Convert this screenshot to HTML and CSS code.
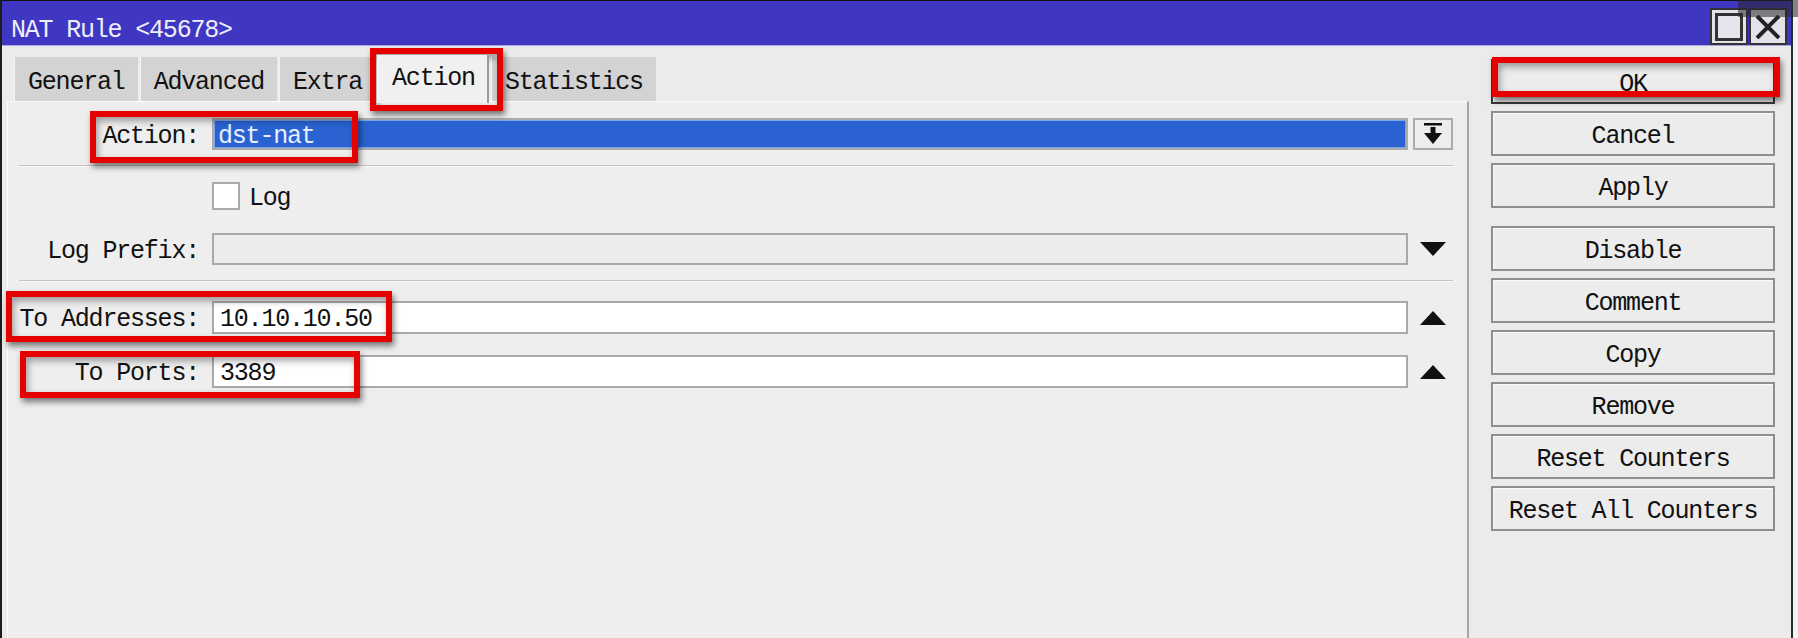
FILE: index.html
```html
<!DOCTYPE html>
<html>
<head>
<meta charset="utf-8">
<link rel="stylesheet" href="styles.css">
</head>
<body>
<div class="screen">
  <div class="window">
    <div class="titlebar">
      <span class="title">NAT Rule &lt;45678&gt;</span>
      <div class="tb-btns">
        <span class="tb-btn"><span class="sq"></span></span>
        <span class="tb-btn">
          <svg width="26" height="24" viewBox="0 0 26 24"><path d="M2 1 L24 23 M24 1 L2 23" stroke="#222" stroke-width="4" fill="none"/></svg>
        </span>
      </div>
    </div>
    <div class="main">
      <div class="left">
        <div class="tabs">
          <span class="tab">General</span>
          <span class="tab">Advanced</span>
          <span class="tab">Extra</span>
          <span class="tab active">Action</span>
          <span class="tab">Statistics</span>
        </div>
        <div class="panel">
          <div class="row r-action">
            <span class="label">Action:</span>
            <span class="field selected"><span class="sel-text">dst-nat</span></span>
            <span class="side dd">
              <svg width="20" height="22" viewBox="0 0 20 22"><rect x="1" y="0" width="18" height="2.5" fill="#111"/><rect x="7.5" y="4" width="5" height="8" fill="#111"/><path d="M1 10 L19 10 L10 21 Z" fill="#111"/></svg>
            </span>
          </div>
          <div class="sep s1"></div>
          <div class="row r-log">
            <span class="label"></span>
            <span class="check-wrap"><span class="check"></span><span class="check-label">Log</span></span>
          </div>
          <div class="row r-prefix">
            <span class="label">Log Prefix:</span>
            <span class="field disabled"></span>
            <span class="side"><svg width="26" height="14" viewBox="0 0 26 14"><path d="M0 0 L26 0 L13 14 Z" fill="#111"/></svg></span>
          </div>
          <div class="sep s2"></div>
          <div class="row r-addr">
            <span class="label">To Addresses:</span>
            <span class="field">10.10.10.50</span>
            <span class="side"><svg width="26" height="14" viewBox="0 0 26 14"><path d="M0 14 L26 14 L13 0 Z" fill="#111"/></svg></span>
          </div>
          <div class="row r-ports">
            <span class="label">To Ports:</span>
            <span class="field">3389</span>
            <span class="side"><svg width="26" height="14" viewBox="0 0 26 14"><path d="M0 14 L26 14 L13 0 Z" fill="#111"/></svg></span>
          </div>
        </div>
      </div>
      <div class="buttons">
        <span class="btn default">OK</span>
        <span class="btn">Cancel</span>
        <span class="btn">Apply</span>
        <span class="btn group">Disable</span>
        <span class="btn">Comment</span>
        <span class="btn">Copy</span>
        <span class="btn">Remove</span>
        <span class="btn">Reset Counters</span>
        <span class="btn">Reset All Counters</span>
      </div>
    </div>
  </div>
  <div class="mark m-tab"></div>
  <div class="mark m-ok"></div>
  <div class="mark m-action"></div>
  <div class="mark m-addr"></div>
  <div class="mark m-ports"></div>
  <div class="shade"></div>
</div>
</body>
</html>
```
FILE: styles.css
```css
html, body {
  margin: 0;
  padding: 0;
  background: #f4f4f4;
  overflow: hidden;
}
.screen {
  position: relative;
  width: 1798px;
  height: 638px;
  font-family: "Liberation Mono", "DejaVu Sans Mono", monospace;
  font-size: 25px;
  letter-spacing: -1.2px;
  color: #111;
}
.window {
  box-sizing: border-box;
  width: 1793px;
  height: 638px;
  border-left: 2px solid #1c1c1c;
  border-right: 2px solid #2a2a2a;
  border-top: 1px solid #111;
  background: #ebebeb;
  display: flex;
  flex-direction: column;
}
.titlebar {
  height: 44px;
  background: #3f37c2;
  border-bottom: 1px solid #a9a6e6;
  display: flex;
  justify-content: space-between;
  align-items: flex-start;
  padding: 0 4px 0 9px;
  flex: none;
}
.title {
  color: #eeeef8;
  line-height: 40px;
  padding-top: 10px;
}
.tb-btns {
  display: flex;
  gap: 1px;
  margin-top: 7px;
}
.tb-btn {
  box-sizing: border-box;
  width: 38px;
  height: 37px;
  background: #e3e1ea;
  border: 2px solid #333;
  display: flex;
  align-items: center;
  justify-content: center;
}
.tb-btn .sq {
  box-sizing: border-box;
  width: 28px;
  height: 28px;
  border: 3px solid #333;
  background: #e6e4ec;
}
.main {
  flex: 1;
  display: flex;
  min-height: 0;
}
.left {
  width: 1467px;
  display: flex;
  flex-direction: column;
  flex: none;
}
.tabs {
  display: flex;
  gap: 2px;
  height: 44px;
  margin-top: 11px;
  padding-left: 12px;
  align-items: flex-end;
  flex: none;
}
.tab {
  box-sizing: border-box;
  height: 44px;
  padding: 3px 13px 0;
  background: #d3d3d3;
  border-left: 1px solid #f4f4f4;
  line-height: 45px;
  white-space: nowrap;
}
.tab.active {
  height: 48px;
  margin-bottom: -2px;
  background: #f0f0f0;
  border-right: 2px solid #9a9a9a;
  line-height: 45px;
  padding: 1px 12px 0 14px;
  position: relative;
  z-index: 1;
}
.panel {
  box-sizing: border-box;
  margin-left: 5px;
  width: 1462px;
  flex: 1;
  background: #eeeeee;
  border-left: 1px solid #fbfbfb;
  border-top: 1px solid #fbfbfb;
  border-right: 2px solid #a6a6a6;
  padding: 16px 14px 0 0;
  display: flex;
  flex-direction: column;
}
.row {
  display: flex;
  align-items: center;
  flex: none;
  height: 33px;
}
.label {
  width: 191px;
  margin-right: 13px;
  text-align: right;
  white-space: pre;
  flex: none;
  line-height: 24px;
  padding-top: 5px;
}
.field {
  box-sizing: border-box;
  flex: 1;
  height: 33px;
  background: #fff;
  border: 2px solid #a9a9a9;
  padding-left: 6px;
  line-height: 34px;
  white-space: nowrap;
}
.field.disabled {
  background: #ececec;
}
.field.selected {
  height: 32px;
  background: #2a63d1;
  border-color: #ababab;
  box-shadow: inset 0 0 0 1px #7aa6ea;
  padding-left: 4px;
}
.sel-text {
  color: #e6eeff;
  line-height: 33px;
}
.side {
  box-sizing: border-box;
  width: 40px;
  margin-left: 5px;
  height: 32px;
  display: flex;
  align-items: center;
  justify-content: center;
  flex: none;
}
.side.dd {
  border: 2px solid #ababab;
  background: #ededed;
}
.sep {
  flex: none;
  height: 1px;
  background: #c2c2c2;
  border-bottom: 1px solid #fafafa;
  margin-left: 11px;
}
.r-action { height: 32px; }
.s1 { margin-top: 15px; }
.r-log { margin-top: 15px; height: 28px; }
.r-prefix { margin-top: 23px; height: 32px; }
.r-prefix .field { height: 32px; }
.s2 { margin-top: 15px; }
.r-addr { margin-top: 19px; }
.r-ports { margin-top: 21px; }
.check-wrap {
  display: flex;
  align-items: center;
}
.check {
  box-sizing: border-box;
  width: 28px;
  height: 28px;
  background: #fff;
  border: 2px solid #aaaaaa;
  margin-right: 9px;
}
.check-label {
  line-height: 24px;
  padding-top: 5px;
}
.buttons {
  margin-left: 22px;
  width: 284px;
  display: flex;
  flex-direction: column;
  gap: 7px;
  padding-top: 13px;
  flex: none;
}
.btn {
  box-sizing: border-box;
  height: 45px;
  border: 2px solid #8e8e8e;
  background: #ececec;
  box-shadow: inset 1px 1px 0 #fafafa;
  text-align: center;
  line-height: 47px;
  white-space: nowrap;
}
.btn.default {
  border-color: #3a3a3a;
}
.btn.group {
  margin-top: 11px;
}
.mark {
  position: absolute;
  box-sizing: border-box;
  border: 6px solid #e60000;
  box-shadow: 2px 4px 6px rgba(0,0,0,0.5), inset 2px 4px 7px rgba(0,0,0,0.35);
}
.m-tab { left: 370px; top: 48px; width: 133px; height: 63px; }
.m-ok { left: 1492px; top: 57px; width: 288px; height: 40px; }
.m-action { left: 90px; top: 111px; width: 268px; height: 52px; }
.m-addr { left: 6px; top: 291px; width: 386px; height: 51px; }
.m-ports { left: 20px; top: 351px; width: 340px; height: 47px; }
.shade {
  position: absolute;
  left: 1738px;
  top: 0;
  width: 60px;
  height: 17px;
  background: rgba(40,40,40,0.55);
}
```
